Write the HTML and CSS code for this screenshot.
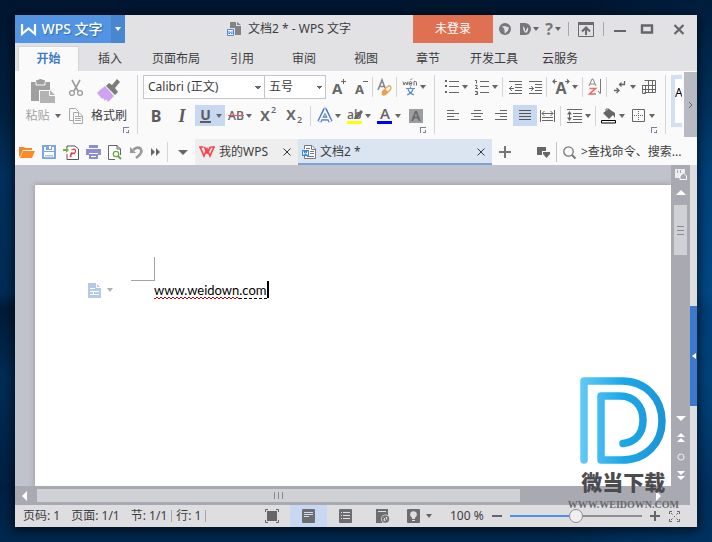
FILE: index.html
```html
<!DOCTYPE html>
<html lang="zh-CN">
<head>
<meta charset="utf-8">
<meta name="viewport" content="width=device-width, initial-scale=1">
<title>文档2 * - WPS 文字</title>
<link rel="stylesheet" href="styles.css">
</head>
<body>
<div class="window">
  <header class="titlebar">
    <button class="brand" type="button">
      <svg width="15" height="13" viewBox="0 0 15 13"><path d="M1 1V11L7.500 5.500L14 11V1" fill="none" stroke="#fff" stroke-width="2.200"/></svg>
      <span>WPS 文字</span>
    </button>
    <button class="brand-menu" type="button" aria-label="菜单"><i class="caret caret-white"></i></button>
    <h1 class="title">
      <svg width="15" height="15" viewBox="0 0 15 15"><path d="M3 0h6v4h5v9H8V6H3z" fill="#838386"/><path d="M10 0l4 3h-4z" fill="#838386"/><path d="M.5 7.500h6v6h-6z" fill="#fff" stroke="#4a8ddc"/><path d="M2 9v3l1.500-1.500L5 12V9" fill="none" stroke="#3f7fd0"/></svg>
      <span>文档2 * - WPS 文字</span>
    </h1>
    <button class="login" type="button">未登录</button>
    <div class="tools">
      <button type="button" class="w24" aria-label="皮肤"><svg width="12" height="12" viewBox="0 0 12 12"><circle cx="6" cy="6" r="6" fill="#77777a"/><path d="M2.500 3.500L6 3l4 1.500-1 3L6 10.500z" fill="#e2e2e5"/><path d="M2 2l3 3.500L6 10 4 7z" fill="#77777a"/></svg></button>
      <button type="button" class="w24" aria-label="稻壳"><svg width="11" height="12" viewBox="0 0 11 12"><path d="M0 0h5a6 6 0 0 1 0 12H0z" fill="#77777a"/><path d="M3 3c0 4 1 6 3 7 3-2 2-4 2-6L6 7z" fill="#e2e2e5"/><path d="M5.500 2v6" stroke="#77777a"/></svg><i class="caret"></i></button>
      <button type="button" class="w24 help" aria-label="帮助">?<i class="caret"></i></button>
      <i class="sep sep-dark"></i>
      <button type="button" class="w28" aria-label="功能区"><svg width="16" height="15" viewBox="0 0 16 15"><path d="M.500.500h15v14H.500z" fill="none" stroke="#6c6c70"/><path d="M0 0h16v3H0z" fill="#6c6c70"/><path d="M8 13V6M4 9.500L8 5.500l4 4" fill="none" stroke="#6c6c70" stroke-width="2"/></svg></button>
      <i class="sep sep-dark"></i>
      <button type="button" class="w26" aria-label="最小化"><svg width="12" height="12" viewBox="0 0 12 12"><path d="M0 8h12" stroke="#66666a" stroke-width="2"/></svg></button>
      <button type="button" class="w28" aria-label="最大化"><svg width="12" height="10" viewBox="0 0 12 10"><path d="M1 1.500h10v7H1z" fill="none" stroke="#66666a" stroke-width="2.400"/></svg></button>
      <button type="button" class="w36" aria-label="关闭"><svg width="12" height="11" viewBox="0 0 12 11"><path d="M1.500 1l9 9M10.500 1l-9 9" stroke="#66666a" stroke-width="2.200"/></svg></button>
    </div>
  </header>

  <nav class="tabs">
    <a class="active" href="#home">开始</a><a href="#insert">插入</a><a href="#layout">页面布局</a><a href="#ref">引用</a><a href="#review">审阅</a><a href="#view">视图</a><a href="#section">章节</a><a href="#dev">开发工具</a><a href="#cloud">云服务</a>
  </nav>

  <section class="ribbon">
    <div class="group clipboard">
      <div class="clip-items">
        <button type="button" class="big paste">
          <svg width="24" height="24" viewBox="0 0 24 24"><path d="M0 3h5V2q0-1 1-1h1q2.500-2 5 0h1q1 0 1 1v1h5v8H8v11H0z" fill="#9f9f9f"/><path d="M5 3v3h9V3" fill="none" stroke="#fafafa"/><path d="M9 12h9v5h6v7H9z" fill="#b3b3b3"/><path d="M19 11l5 5h-5z" fill="#b3b3b3"/></svg>
          <span>粘贴<i class="caret"></i></span>
        </button>
        <div class="stack">
          <button type="button" aria-label="剪切"><svg width="14" height="17" viewBox="0 0 14 17"><path d="M3 0l6 11M11 0L5 11" stroke="#9c9c9c" stroke-width="1.600"/><circle cx="3" cy="13" r="2.400" fill="none" stroke="#9c9c9c" stroke-width="1.300"/><circle cx="11" cy="13" r="2.400" fill="none" stroke="#9c9c9c" stroke-width="1.300"/></svg></button>
          <button type="button" aria-label="复制"><svg width="14" height="16" viewBox="0 0 14 16"><path d="M4.500 12.500h-4V.500h6l3 3v1" fill="none" stroke="#a9a9a9"/><path d="M4.500 4.500h5.500l3.500 3.500v7.500h-9zM9.500 4.500v4h4M6 8.500h3M6 10.500h6M6 12.500h6" fill="none" stroke="#a9a9a9"/></svg></button>
        </div>
        <button type="button" class="big">
          <svg width="24" height="24" viewBox="0 0 24 24"><path d="M20 0l3 3-5 6 3 4-3 3-9-9 3-3 3 2z" fill="#7c7c7c"/><path d="M8 7l9 10-6 6-2-3-1 2-2-3-1 1-5-6 3-3z" fill="#cda4f2"/></svg>
          <span>格式刷</span>
        </button>
      </div>
      <button type="button" class="launcher" aria-label="剪贴板设置"></button>
    </div>

    <div class="group font">
      <div class="row row-top">
        <select class="font-name" aria-label="字体"><option>Calibri (正文)</option></select>
        <select class="font-size" aria-label="字号"><option>五号</option></select>
        <button type="button" class="w24" aria-label="增大字号"><svg width="14" height="18" viewBox="0 0 14 18"><text x="0" y="16" class="glyph" font-size="15">A</text><path d="M9 3.500h5M11.500 1v5" stroke="#666"/></svg></button>
        <button type="button" class="w20" aria-label="减小字号"><svg width="14" height="18" viewBox="0 0 14 18"><text x="1" y="16" class="glyph" font-size="13">A</text><path d="M9 3.500h5" stroke="#666"/></svg></button>
        <i class="sep"></i>
        <button type="button" class="w20" aria-label="清除格式"><svg width="16" height="17" viewBox="0 0 16 17"><path d="M1 11L5 1l3 8M2.500 7.500h5" fill="none" stroke="#868686" stroke-width="1.600"/><path d="M5.500 12.500l5-5q2-1.500 3 0t0 3l-5 5q-2 1-3 0t0-3z" fill="#fff" stroke="#eba04f" stroke-width="1.300"/><path d="M5 12.500L8 10l3.500 3-3 3H6z" fill="#eba04f"/></svg></button>
        <i class="sep"></i>
        <button type="button" class="drop" aria-label="拼音指南"><svg width="16" height="18" viewBox="0 0 16 18"><path d="M1 3.500l1 3.500 1.500-3L5 7l1-3.500M7 5.500h3q0-2-1.500-2T7 5.500 8.500 7H10M8.500 2L10 .500M12 7.500v-4h1.500q1 0 1 1v3" fill="none" stroke="#707070"/><path d="M4 10.500h9M8.500 8.500v2M6 11q1 4 6 6M11 11q-1 4-6 6" fill="none" stroke="#5d90d6" stroke-width="1.200"/></svg><i class="caret"></i></button>
      </div>
      <div class="row row-bottom">
        <button type="button" class="w26 letter bold" aria-label="加粗">B</button>
        <button type="button" class="w26 letter italic" aria-label="倾斜">I</button>
        <button type="button" class="drop on" aria-label="下划线"><span class="letter underline">U</span><i class="caret"></i></button>
        <button type="button" class="drop" aria-label="删除线"><svg width="16" height="16" viewBox="0 0 16 16"><text x="8" y="12" text-anchor="middle" font-size="12" class="glyph thin">AB</text><path d="M0 7.500h16" stroke="#ec5a5a"/></svg><i class="caret"></i></button>
        <button type="button" class="w26" aria-label="上标"><svg width="16" height="18" viewBox="0 0 16 18"><text x="0" y="14" font-size="18" class="glyph thin">x</text><text x="11" y="6" font-size="9" class="glyph thin">2</text></svg></button>
        <button type="button" class="w26" aria-label="下标"><svg width="16" height="18" viewBox="0 0 16 18"><text x="0" y="13" font-size="18" class="glyph thin">x</text><text x="11" y="16" font-size="9" class="glyph thin">2</text></svg></button>
        <i class="sep sep-wide"></i>
        <button type="button" class="drop" aria-label="文字效果"><svg width="16" height="16" viewBox="0 0 16 16"><path d="M2 14L8 3l6 11M5 10.500h6" fill="none" stroke="#c9d8f4" stroke-width="5"/><path d="M2.500 13.500L7.500 2.500h1l5 11M5 10.500h6" fill="none" stroke="#4c76c6" stroke-width="4"/><path d="M2.500 13.500L8 2.500l5.500 11M5 10.500h6" fill="none" stroke="#fff" stroke-width="1.700"/></svg><i class="caret"></i></button>
        <button type="button" class="drop" aria-label="突出显示"><svg width="16" height="16" viewBox="0 0 16 16"><path d="M0 13h15v3H0z" fill="#ff0"/><text x="0" y="11" font-size="12" class="glyph thin">ab</text><path d="M14 2l2 2-6 7H7l1-3z" fill="#666"/></svg><i class="caret"></i></button>
        <button type="button" class="drop" aria-label="字体颜色"><svg width="16" height="16" viewBox="0 0 16 16"><path d="M0 13h15v3H0z" fill="#00f"/><text x="8" y="11" font-size="15" text-anchor="middle" class="glyph thin">A</text></svg><i class="caret"></i></button>
        <button type="button" class="w24" aria-label="字符底纹"><svg width="14" height="14" viewBox="0 0 14 14"><path d="M0 0h14v14H0z" fill="#9c9ea3"/><text x="7" y="12" font-size="14" text-anchor="middle" class="glyph thin">A</text></svg></button>
      </div>
      <button type="button" class="launcher" aria-label="字体设置"></button>
    </div>

    <div class="group para">
      <div class="row row-top">
        <button type="button" class="drop" aria-label="项目符号"><svg width="14" height="14" viewBox="0 0 14 14"><path d="M0 0h2v2H0zM0 5h2v2H0zM0 11h2v2H0z" fill="#666"/><path d="M4 1.500h10M4 6.500h10M4 12.500h10" stroke="#666"/></svg><i class="caret"></i></button>
        <button type="button" class="drop" aria-label="编号"><svg width="14" height="16" viewBox="0 0 14 16"><path d="M0 1.500h1.500v3M0 6.500h2v1.500L.500 9.500H3M0 12.500h2.500v3H0M1 14h1" fill="none" stroke="#666"/><path d="M5 2.500h9M5 7.500h9M5 13.500h9" stroke="#666"/></svg><i class="caret"></i></button>
        <i class="sep"></i>
        <button type="button" class="w20" aria-label="减少缩进"><svg width="13" height="13" viewBox="0 0 13 13"><path d="M0 .500h13M6 3.500h7M6 6.500h7M6 9.500h7M0 12.500h13M0 7.500h5M3 5L.500 7.500 3 10" fill="none" stroke="#666"/></svg></button>
        <button type="button" class="w20" aria-label="增加缩进"><svg width="13" height="13" viewBox="0 0 13 13"><path d="M0 .500h13M6 3.500h7M6 6.500h7M6 9.500h7M0 12.500h13M0 7.500h5M2 5l2.500 2.500L2 10" fill="none" stroke="#666"/></svg></button>
        <i class="sep"></i>
        <button type="button" class="drop drop-wide" aria-label="中文版式"><svg width="16" height="16" viewBox="0 0 16 16"><text x="8" y="15" font-size="16" text-anchor="middle" class="glyph">A</text><path d="M0 2.500h4M2 .500l-2 2 2 2M12 2.500h4M14 .500l2 2-2 2" fill="none" stroke="#666" stroke-width="1.200"/></svg><i class="caret"></i></button>
        <i class="sep"></i>
        <button type="button" class="w20" aria-label="排序"><svg width="14" height="16" viewBox="0 0 14 16"><path d="M1 7l3-7h1l3 7M2 5h5" fill="none" stroke="#888"/><path d="M1.500 9.500h6l-6 5.500H8" fill="none" stroke="#ec6a6a" stroke-width="1.600"/><path d="M12.500 0v14M10 12l2.500 3" fill="none" stroke="#777"/></svg></button>
        <i class="sep"></i>
        <button type="button" class="drop" aria-label="显示编辑标记"><svg width="12" height="13" viewBox="0 0 12 13"><path d="M10.500 0v3.500H6M7.500 1.500l-2 2 2 2M0 9.500h4.500M2.500 7l2.500 2.500L2.500 12" fill="none" stroke="#666" stroke-width="1.300"/></svg><i class="caret"></i></button>
        <button type="button" class="w20" aria-label="制表"><svg width="14" height="14" viewBox="0 0 14 14"><path d="M2.500.500h11v12h-11M.500 5v8.500h3V5M0 5.500h14M3 9.500h10.500M6.500.500v12M10.500.500v12M.500 9.500h3" fill="none" stroke="#666"/></svg></button>
      </div>
      <div class="row row-bottom">
        <button type="button" class="w24" aria-label="左对齐"><svg width="12" height="11" viewBox="0 0 12 11"><path d="M0 .500h7M0 3.500h12M0 6.500h7M0 9.500h12" stroke="#666"/></svg></button>
        <button type="button" class="w24" aria-label="居中"><svg width="12" height="11" viewBox="0 0 12 11"><path d="M3 .500h7M0 3.500h12M3 6.500h7M0 9.500h12" stroke="#666"/></svg></button>
        <button type="button" class="w24" aria-label="右对齐"><svg width="12" height="11" viewBox="0 0 12 11"><path d="M5 .500h7M0 3.500h12M5 6.500h7M0 9.500h12" stroke="#666"/></svg></button>
        <button type="button" class="w24 on" aria-label="两端对齐"><svg width="12" height="11" viewBox="0 0 12 11"><path d="M0 .500h12M0 3.500h12M0 6.500h12M0 9.500h12" stroke="#555"/></svg></button>
        <button type="button" class="w20" aria-label="分散对齐"><svg width="15" height="12" viewBox="0 0 15 12"><path d="M.500 0v12M14.500 0v12M2 3.500h11M4.500 1L2 3.500 4.500 6M10.500 1L13 3.500 10.500 6M2 7.500h11M2 10.500h11" fill="none" stroke="#666"/></svg></button>
        <i class="sep sep-wide"></i>
        <button type="button" class="drop" aria-label="行距"><svg width="15" height="14" viewBox="0 0 15 14"><path d="M0 .500h15M6 4.500h9M6 7.500h9M6 10.500h9M0 13.500h15M2.500 3v8" stroke="#666"/><path d="M0 5.500L2.500 2 5 5.500zM0 8.500h5L2.500 12z" fill="#666"/></svg><i class="caret"></i></button>
        <i class="sep"></i>
        <button type="button" class="drop" aria-label="底纹"><svg width="16" height="16" viewBox="0 0 16 16"><path d="M2 5l6-4 6 4v5l-2-3-4 4z" fill="#666"/><path d="M5 4V1h3v2" fill="none" stroke="#666"/><path d="M.500 12.500h14v2.500H.500z" fill="#fff" stroke="#000"/></svg><i class="caret"></i></button>
        <button type="button" class="drop" aria-label="边框"><svg width="13" height="13" viewBox="0 0 13 13"><path d="M.500.500h12v12H.500z" fill="none" stroke="#666"/><path d="M6.500 2v10M2 6.500h10" stroke="#666" stroke-dasharray="1 1"/></svg><i class="caret"></i></button>
      </div>
      <button type="button" class="launcher" aria-label="段落设置"></button>
    </div>

    <div class="styles"><span>A</span></div>
    <button type="button" class="ribbon-next" aria-label="更多"><svg width="5" height="8" viewBox="0 0 5 8"><path d="M1 1l3 3-3 3" fill="none" stroke="#666"/></svg></button>
  </section>

  <section class="docbar">
    <div class="quick">
      <button type="button" aria-label="打开"><svg width="16" height="12" viewBox="0 0 16 12"><path d="M0 10V1h5l1 1h7v2H4L1 11z" fill="#f08a30"/><path d="M4 5h12l-3 7H1z" fill="#fb8b25"/></svg></button>
      <button type="button" aria-label="保存"><svg width="14" height="14" viewBox="0 0 14 14"><path d="M1 1h12v12H1z" fill="#fff" stroke="#7aa5ea" stroke-width="2"/><path d="M2 6.500h10" stroke="#7aa5ea"/><path d="M4 1h6v4H4z" fill="#7aa5ea"/><path d="M7 1h2v3H7z" fill="#fff"/><path d="M3 10.500h8M3 12h8" stroke="#aac6f0"/></svg></button>
      <button type="button" aria-label="输出为PDF"><svg width="16" height="15" viewBox="0 0 16 15"><path d="M4 3V1h8l3.500 3v10.500H4V9" fill="#fff" stroke="#555"/><path d="M0 4h3V2l3 3-3 3V6H0z" fill="#6db33f"/><path d="M8.500 5q4-2 4 1t-4 2q-2 3 0 4M12 9q-3-2-5 3" fill="none" stroke="#d64747" stroke-width="1.300"/></svg></button>
      <button type="button" aria-label="打印"><svg width="15" height="14" viewBox="0 0 15 14"><path d="M3 0h9v3H3zM0 4h15v6h-3V8H3v2H0z" fill="#8e8ecb"/><path d="M3 9h9v5H3z" fill="#8e8ecb"/><path d="M5 11.500h5" stroke="#fff"/></svg></button>
      <button type="button" aria-label="打印预览"><svg width="14" height="15" viewBox="0 0 14 15"><path d="M7 14.500H.500V.500h8.500l3.500 3.500V10M9 .500v3.500h3.500" fill="#fff" stroke="#666"/><circle cx="8" cy="9" r="2.700" fill="#fff" stroke="#6aaa48" stroke-width="1.300"/><path d="M10 11l3 3" stroke="#6aaa48" stroke-width="2"/></svg></button>
      <button type="button" aria-label="撤销"><svg width="14" height="14" viewBox="0 0 14 14"><path d="M3 5q4-4 7.500-1.500Q13.500 8 6 13" fill="none" stroke="#999" stroke-width="2.600"/><path d="M0 2v6h6z" fill="#999"/></svg></button>
      <button type="button" class="w16" aria-label="更多命令"><svg width="10" height="8" viewBox="0 0 10 8"><path d="M0 0l4 4-4 4zM5 0l4 4-4 4z" fill="#666"/></svg></button>
      <i class="sep"></i>
      <button type="button" aria-label="自定义"><i class="caret caret-big"></i></button>
    </div>
    <div class="doc-tab home">
      <svg width="16" height="12" viewBox="0 0 16 12"><path d="M1 1l4 9L8 3l3 7 4-9M0 1h4.500M5.500 1l3 7M11.500 1h4.500M11.500 1l-3 6" fill="none" stroke="#f4464c" stroke-width="1.700"/></svg>
      <span>我的WPS</span>
      <button type="button" aria-label="关闭 我的WPS"><svg width="8" height="8" viewBox="0 0 8 8"><path d="M.500.500l7 7M7.500.500l-7 7" stroke="#333"/></svg></button>
    </div>
    <div class="doc-tab current">
      <svg width="14" height="14" viewBox="0 0 14 14"><path d="M2.500 4V.500h7.500l3.500 3.500v9.500h-11V11" fill="#fff" stroke="#77777f"/><path d="M9.500.500v4h4M4 3.500h4M8 6.500h4M8 8.500h4M5 11.500h7" fill="none" stroke="#77777f"/><path d="M0 5h7v6H0z" fill="#3f86db"/><path d="M1.500 6.500V9.500L3.500 8l2 1.500v-3" fill="none" stroke="#fff"/></svg>
      <span>文档2 *</span>
      <button type="button" aria-label="关闭 文档2"><svg width="8" height="8" viewBox="0 0 8 8"><path d="M.500.500l7 7M7.500.500l-7 7" stroke="#333"/></svg></button>
    </div>
    <button type="button" class="new" aria-label="新建"><svg width="12" height="12" viewBox="0 0 12 12"><path d="M6 0v12M0 6h12" stroke="#777" stroke-width="2"/></svg></button>
    <div class="find">
      <button type="button" class="w24" aria-label="标签列表"><svg width="13" height="11" viewBox="0 0 13 11"><path d="M0 0h9v4H5v4H0z" fill="#666"/><path d="M6 5h7v2l-3.500 4L6 7z" fill="#666"/></svg></button>
      <i class="sep sep-mid"></i>
      <svg width="13" height="13" viewBox="0 0 13 13"><circle cx="5.500" cy="5.500" r="4.700" fill="none" stroke="#777" stroke-width="1.300"/><path d="M9 9l3.500 3.500" stroke="#777" stroke-width="2"/></svg>
      <input type="text" aria-label="查找命令" value="&gt;查找命令、搜索...">
    </div>
  </section>

  <main class="work">
    <div class="view">
      <div class="canvas">
        <article class="page">
          <div class="corner"></div>
          <div class="line">
            <button type="button" class="assist" aria-label="段落布局"><svg width="13" height="15" viewBox="0 0 13 15"><path d="M0 0h8l5 5v10H0z" fill="#b5c9e8"/><path d="M8.500 0v4.500H13M2 5.500h5M2 8.500h9M2 11.500h9M5.500 8v4" fill="none" stroke="#fff"/></svg><i class="caret caret-pale"></i></button>
            <p><span class="wrong">www.weidown</span><span class="dash">.com</span><i class="cursor"></i></p>
          </div>
        </article>
      </div>
      <div class="hscroll">
        <button type="button" aria-label="向左"><svg width="5" height="10" viewBox="0 0 5 10"><path d="M5 0v10L0 5z" fill="#fff"/></svg></button>
        <div class="htrack"><div class="hthumb"><i class="grip"></i></div></div>
        <button type="button" aria-label="向右"><svg width="5" height="10" viewBox="0 0 5 10"><path d="M0 0v10l5-5z" fill="#fff"/></svg></button>
      </div>
    </div>
    <div class="vscroll">
      <button type="button" aria-label="标尺"><svg width="12" height="11" viewBox="0 0 12 11"><path d="M0 0h10v4H8L5 7v2H0z" fill="#eee"/><path d="M2.500 1v3M5.500 1v3" stroke="#a9a9b2"/><path d="M5 10.500V7L8.500 4l3 3v3.500z" fill="#a9a9b2" stroke="#fff"/></svg></button>
      <button type="button" aria-label="向上"><svg width="10" height="5" viewBox="0 0 10 5"><path d="M0 5h10L5 0z" fill="#fff"/></svg></button>
      <div class="vthumb"><i class="grip grip-v"></i></div>
      <div class="vspace"></div>
      <button type="button" aria-label="向下"><svg width="10" height="5" viewBox="0 0 10 5"><path d="M0 0h10L5 5z" fill="#fff"/></svg></button>
      <button type="button" aria-label="上一页"><svg width="8" height="9" viewBox="0 0 8 9"><path d="M0 4h8L4 0zM0 9h8L4 5z" fill="#fff"/></svg></button>
      <button type="button" aria-label="选择浏览对象"><svg width="8" height="8" viewBox="0 0 8 8"><circle cx="4" cy="4" r="3" fill="none" stroke="#e8e8ea" stroke-width="1.200"/></svg></button>
      <button type="button" aria-label="下一页"><svg width="8" height="9" viewBox="0 0 8 9"><path d="M0 0h8L4 4zM0 5h8L4 9z" fill="#fff"/></svg></button>
    </div>
    <div class="side"><button type="button" aria-label="展开任务窗格"><svg width="4" height="6" viewBox="0 0 4 6"><path d="M4 0v6L0 3z" fill="#fff"/></svg></button></div>
  </main>

  <footer class="status">
    <div class="info"><span>页码: 1</span><span>页面: 1/1</span><span class="ruled">节: 1/1</span><span class="ruled">行: 1</span></div>
    <div class="views">
      <button type="button" aria-label="全屏显示"><svg width="14" height="14" viewBox="0 0 14 14"><path d="M2 2h10v10H2z" fill="#66666a"/><path d="M.500 3V.500H3M11 .500h2.500V3M13.500 11v2.500H11M3 13.500H.500V11" fill="none" stroke="#66666a"/></svg></button>
      <button type="button" class="on" aria-label="页面视图"><svg width="13" height="14" viewBox="0 0 13 14"><rect width="13" height="14" rx="1" fill="#6c6d70"/><path d="M2 3.500h9M2 5.500h9M2 7.500h5" stroke="#cfdcf0"/></svg></button>
      <button type="button" aria-label="大纲"><svg width="13" height="14" viewBox="0 0 13 14"><rect width="13" height="14" rx="1" fill="#6c6d70"/><path d="M2 3.500h1M4 3.500h7M2 6.500h1M4 6.500h7M2 9.500h1M4 9.500h7" stroke="#dedee0"/></svg></button>
      <button type="button" aria-label="Web版式"><svg width="14" height="14" viewBox="0 0 14 14"><path d="M0 0h12v14H0z" fill="#6c6d70"/><path d="M2 2.500h8" stroke="#dedee0"/><circle cx="9.500" cy="10" r="4.500" fill="#dedee0"/><circle cx="9.500" cy="10" r="3" fill="none" stroke="#6c6d70" stroke-width="1.400"/><path d="M7 10l2-2 1 4 2-3" fill="none" stroke="#6c6d70"/></svg></button>
      <button type="button" aria-label="护眼模式"><svg width="13" height="14" viewBox="0 0 13 14"><rect width="13" height="14" rx="1" fill="#6c6d70"/><circle cx="6.500" cy="5.500" r="3.300" fill="#dedee0"/><path d="M5 8h3v2H5zM5 11h3v1H5z" fill="#dedee0"/></svg><i class="caret"></i></button>
    </div>
    <div class="zoom">
      <label for="zoom">100 %</label>
      <button type="button" aria-label="缩小"><svg width="10" height="10" viewBox="0 0 10 10"><path d="M0 5h10" stroke="#66666a" stroke-width="2"/></svg></button>
      <input type="range" id="zoom" min="0" max="200" value="100">
      <button type="button" aria-label="放大"><svg width="10" height="10" viewBox="0 0 10 10"><path d="M0 5h10M5 0v10" stroke="#66666a" stroke-width="2"/></svg></button>
      <button type="button" aria-label="适应窗口"><svg width="11" height="11" viewBox="0 0 11 11"><path d="M.500 3V.500H3M8 .500h2.500V3M10.500 8v2.500H8M3 10.500H.500V8M2 2l1.500 1.500M9 2L7.500 3.500M9 9L7.500 7.500M2 9l1.500-1.500M5 5.500h1" fill="none" stroke="#66666a"/></svg></button>
    </div>
  </footer>

  <div class="mark">
    <svg width="86" height="88" viewBox="0 0 86 88">
      <defs><linearGradient id="g" gradientUnits="userSpaceOnUse" x1="0" y1="0" x2="86" y2="0"><stop offset="0" stop-color="#63caf6"/><stop offset=".5" stop-color="#1ba8e8"/><stop offset="1" stop-color="#1c94d6"/></linearGradient></defs>
      <path d="M4 83V4H42C66 4 82 22 82 44S66 83 42 83H21V19H40C54 19 63 29 63 43S55 65 43 66.500" fill="none" stroke="url(#g)" stroke-width="7.500" stroke-linecap="round" stroke-linejoin="round"/>
    </svg>
    <strong>微当下载</strong>
    <small>WWW.WEIDOWN.COM</small>
  </div>
</div>
</body>
</html>
```
FILE: styles.css
```css
* { box-sizing: border-box; }

body {
  margin: 0;
  min-height: 100vh;
  padding: 15px;
  display: flex;
  font: 12px/16px "Noto Sans", "Noto Sans CJK SC", sans-serif;
  color: #3c3c3e;
  background:
    radial-gradient(ellipse 30% 65% at 100% 55%, rgba(0, 92, 170, .6), transparent),
    linear-gradient(#001630, #002040 20%, #00305c 32%, #002c56 54%, #001a38 57%, #002d55 70%, #001f42 90%, #00284e);
}

button {
  display: flex;
  align-items: center;
  justify-content: center;
  flex: none;
  padding: 0;
  border: 0;
  background: none;
  font: inherit;
  color: inherit;
}

svg { display: block; flex: none; overflow: visible; }
h1, p { margin: 0; font: inherit; }

.window {
  position: relative;
  flex: 1;
  min-width: 0;
  display: flex;
  flex-direction: column;
  background: #fafafa;
  box-shadow: 0 2px 10px 2px rgba(0, 0, 0, .6);
}

.caret {
  flex: none;
  border: solid transparent;
  border-width: 4px 3px 0;
  border-top-color: #666;
}
.caret-white { border-top-color: #fff; }
.caret-pale { border-top-color: #b0b0b0; }
.caret-big { border-width: 5px 5px 0; }

.sep {
  flex: none;
  width: 1px;
  height: 20px;
  margin: 0 2px 0 1px;
  background: #d4d4d6;
}
.sep-wide { margin: 0 3px; }
.sep-dark { height: 14px; margin: 0 3px; background: #a8a8ac; }
.sep-mid { margin: 0 6px 0 1px; background: #c4c4c6; }

.w16 { width: 16px; }
.w20 { width: 20px; }
.w24 { width: 24px; }
.w26 { width: 26px; }
.w28 { width: 28px; }
.w36 { width: 36px; }
.on { background: #c7d8f0; }

/* title bar */
.titlebar { display: flex; height: 28px; background: #e2e2e5; }
.brand {
  width: 96px;
  gap: 5px;
  padding-right: 2px;
  background: #5294e2;
  color: #fff;
  font-size: 14px;
  font-weight: 500;
  text-shadow: 1px 1px 1px #2f69b0;
}
.brand-menu { width: 14px; background: #4886d2; }
.title {
  flex: 1;
  min-width: 0;
  display: flex;
  align-items: center;
  justify-content: center;
  gap: 6px;
  padding-left: 40px;
  white-space: nowrap;
}
.login { width: 80px; background: #df7152; color: #fff; }
.tools { display: flex; align-items: center; }
.tools button { height: 28px; gap: 2px; }
.tools .help { font-size: 16px; font-weight: 700; color: #77777a; }

/* ribbon tabs */
.tabs { display: flex; height: 28px; padding: 3px 3px 0; background: #e2e2e5; }
.tabs a {
  min-width: 62px;
  padding: 5px 11px 0;
  text-align: center;
  white-space: nowrap;
  color: inherit;
  text-decoration: none;
}
.tabs .active {
  min-width: 61px;
  padding-top: 4px;
  border: 1px solid #d4d4d8;
  border-bottom: 0;
  background: #fafafa;
  color: #3f7ac8;
  font-weight: 700;
}

/* ribbon */
.ribbon { display: flex; height: 68px; padding-top: 4px; }
.group {
  flex: none;
  display: flex;
  flex-direction: column;
  height: 59px;
  border-right: 1px solid #d4d4d6;
}
.clipboard { width: 123px; padding-left: 8px; }
.clip-items { display: flex; height: 52px; }
.big {
  width: 40px;
  flex-direction: column;
  justify-content: flex-start;
  padding-top: 4px;
  gap: 5px;
  white-space: nowrap;
}
.big span { display: flex; align-items: center; gap: 5px; }
.paste { color: #a2a2a2; }
.stack { display: flex; flex-direction: column; width: 26px; }
.stack button { height: 27px; }
.launcher {
  width: 6px;
  height: 6px;
  margin: auto 8px 1px auto;
  background:
    linear-gradient(#7a80a0 0 0) 0 0 / 6px 1px no-repeat,
    linear-gradient(#7a80a0 0 0) 0 0 / 1px 6px no-repeat,
    linear-gradient(#7a80a0 0 0) 100% 100% / 3px 1px no-repeat,
    linear-gradient(#7a80a0 0 0) 100% 100% / 1px 3px no-repeat;
}
.row { display: flex; align-items: center; }
.row button { height: 100%; }
.row-top { height: 24px; margin-bottom: 6px; }
.row-bottom { height: 21px; }
.font { width: 297px; padding-left: 5px; }
.para { width: 231px; padding-left: 6px; }
.row .drop { width: 30px; justify-content: flex-start; }
.row .drop > :first-child { margin: 0 auto; }
.row .drop .caret { margin: 0 3px 0 0; }
.row .drop-wide { width: 32px; }

select {
  appearance: none;
  height: 24px;
  padding: 0 4px;
  border: 1px solid #c6c6c8;
  border-radius: 0;
  font: inherit;
  color: inherit;
  background: conic-gradient(from -45deg at 50% 100%, #666 90deg, transparent 0) no-repeat right 3px center / 6px 3px #fff;
}
.font-name { width: 122px; }
.font-size { width: 62px; margin-left: -1px; }
.font-size + button { margin-left: 1px; }

.glyph { font-family: "Open Sans", sans-serif; font-weight: 700; fill: #666; }
.thin { font-weight: 600; }
.letter { font: 700 16px/18px "Noto Sans", sans-serif; color: #5c5c5e; }
.italic { font-family: "Liberation Serif", serif; font-style: italic; font-size: 18px; }
.underline { font-size: 14px; line-height: 13px; height: 15px; border-bottom: 2px solid #5c5c5e; }

.styles {
  flex: 1;
  min-width: 11px;
  height: 52px;
  margin: 0 2px 0 5px;
  padding: 6px 0 0;
  border: solid #d3dff3;
  border-width: 4px 0 4px 4px;
  background: #fff;
  overflow: hidden;
  font-size: 12px;
  color: #000;
}
.ribbon-next { width: 13px; height: 65px; margin-top: -3px; background: #b7bac2; }

/* document tabs */
.docbar { display: flex; height: 26px; }
.quick { display: flex; align-items: center; padding-left: 1px; width: 180px; flex: none; }
.quick button { width: 22px; height: 26px; }
.quick .w16 { width: 16px; }
.quick .sep { margin: 0 4px 0 3px; }
.doc-tab { display: flex; align-items: center; gap: 4px; padding: 0 3px 0 4px; white-space: nowrap; }
.doc-tab span { flex: 1; }
.doc-tab button { width: 16px; height: 16px; }
.home { flex: none; width: 103px; background: #eee; }
.current { flex: 1; min-width: 80px; padding-top: 2px; border-bottom: 2px solid #7ba3d9; background: #dbe5f1; }
.new { width: 26px; }
.find { flex: none; display: flex; align-items: center; width: 179px; padding-left: 13px; }
.find input {
  flex: 1;
  min-width: 0;
  padding: 0 4px 0 5px;
  border: 0;
  background: none;
  font: inherit;
  color: inherit;
}

/* work area */
.work { flex: 1; display: flex; min-height: 200px; }
.view { flex: 1; min-width: 0; display: flex; flex-direction: column; }
.canvas { flex: 1; display: flex; padding: 20px 0 0 20px; background: #c0c3cb; overflow: hidden; }
.page { flex: 1; min-width: 0; padding-top: 72px; background: #fff; box-shadow: 0 0 5px 1px #9c9eaa; }
.corner { width: 24px; height: 24px; margin-left: 96px; border: solid #a4a4a4; border-width: 0 1px 1px 0; }
.line { display: flex; align-items: flex-start; margin-left: 53px; }
.assist { width: 66px; height: 18px; justify-content: flex-start; gap: 6px; }
.line p { display: flex; color: #000; font: 13px/18px Lato, sans-serif; white-space: nowrap; }
.wrong {
  background:
    linear-gradient(90deg, #c00 50%, transparent 50%) 0 100% / 4px 1px repeat-x,
    linear-gradient(90deg, transparent 50%, #c00 50%) 0 calc(100% - 1px) / 4px 1px repeat-x;
}
.dash { background: repeating-linear-gradient(90deg, #000 0 3px, transparent 3px 5px) 0 100% / 100% 1px no-repeat; }
.cursor { width: 2px; height: 17px; background: #000; }

.hscroll { display: flex; height: 19px; background: #a9a9b2; }
.hscroll button { width: 22px; padding-right: 4px; }
.htrack { flex: 1; padding: 3px 0; }
.hthumb { width: 79%; height: 13px; display: flex; align-items: center; justify-content: center; background: #d0d1d5; }
.grip { width: 9px; height: 7px; background: repeating-linear-gradient(90deg, #8a8a90 0 1px, transparent 1px 4px); }
.grip-v { width: 7px; height: 9px; background: repeating-linear-gradient(#8a8a90 0 1px, transparent 1px 4px); }

.vscroll { flex: none; width: 19px; display: flex; flex-direction: column; align-items: center; padding-bottom: 20px; background: #a9a9b2; }
.vscroll button { width: 19px; height: 19px; }
.vscroll button:first-child { height: 18px; }
.vthumb { flex: none; width: 13px; height: 50px; margin-top: 3px; display: flex; align-items: center; justify-content: center; background: #d0d1d5; }
.vspace { flex: 1; }
.side { flex: none; width: 7px; display: flex; align-items: center; padding-top: 42px; background: #dedee0; }
.side button { width: 7px; height: 100px; background: #3c78cc; }

/* status bar */
.status { display: flex; align-items: center; height: 22px; padding: 0 16px 0 8px; background: #dedee0; }
.info { display: flex; align-items: center; flex: 1; white-space: nowrap; }
.info span { margin-right: 11px; }
.info .ruled { margin-right: 4px; padding-right: 4px; border-right: 1px solid #a6a6aa; line-height: 12px; }
.views { display: flex; align-self: stretch; }
.views button { width: 37px; gap: 6px; }
.zoom { display: flex; align-items: center; margin-left: 12px; }
.zoom label { width: 40px; white-space: nowrap; }
.zoom button { width: 14px; height: 20px; }
.zoom button:last-child { margin-left: 5px; }

input[type="range"] {
  appearance: none;
  width: 132px;
  height: 16px;
  margin: 0 6px;
  background: linear-gradient(90deg, #4c92e6 50%, #909094 50%) no-repeat center / 100% 2px;
}
input[type="range"]::-webkit-slider-thumb {
  appearance: none;
  width: 14px;
  height: 14px;
  border: 1px solid #8c8c90;
  border-radius: 50%;
  background: #efeff0;
}

/* site mark over the window */
.mark {
  position: absolute;
  right: 18px;
  bottom: 16px;
  display: flex;
  flex-direction: column;
  align-items: center;
  pointer-events: none;
  color: #4c4c50;
}
.mark svg { margin-bottom: 4px; }
.mark strong { font: 900 21px/25px "Noto Sans CJK SC", sans-serif; }
.mark small { margin-top: 5px; font: 700 10px/12px "Liberation Serif", serif; color: #6a6a6e; }
```
